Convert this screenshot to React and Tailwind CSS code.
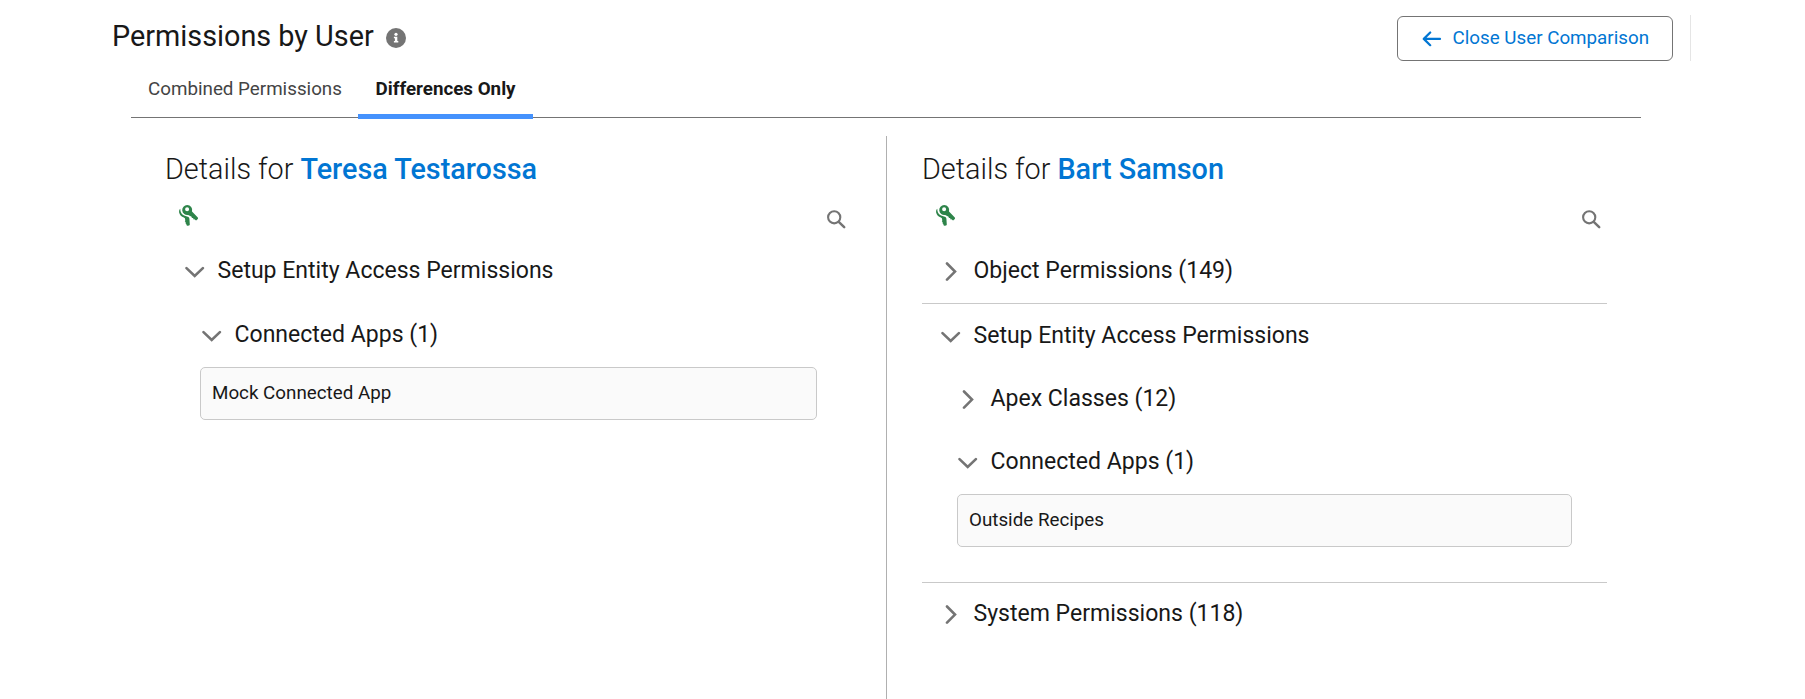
function InfoIcon() {
  return (
    <svg width="20" height="20" viewBox="0 0 20 20">
      <circle cx="10" cy="10" r="10" fill="#747474" />
      <circle cx="10" cy="6.3" r="1.6" fill="#fff" />
      <path d="M7.9 8.8h3.4v4.2h1v1.5H7.9V13h1v-2.7h-1z" fill="#fff" />
    </svg>
  );
}

function ArrowLeft() {
  return (
    <svg width="20" height="16" viewBox="0 0 20 16" fill="none" stroke="#0176d3" strokeWidth="2.2" strokeLinecap="round" strokeLinejoin="round">
      <path d="M18 7.9H2.2M8.2 1.5L1.8 7.9l6.4 6.3" />
    </svg>
  );
}

function KeysIcon() {
  return (
    <svg width="20" height="22" viewBox="0 0 20 22" fill="#2e844a">
      <path
        fillRule="evenodd"
        d="M8.2 0a5 5 0 0 1 4.8 6.4l5.8 6.200c.4.4.4.9 0 1.300l-1.100 1.200c-.4.4-.9.4-1.300 0l-.9-.9-.9.2-.5-1.300-1.200-.2-.3-1.200L9.200 9.900A5 5 0 1 1 8.200 0zm-.1 2.200a2 2 0 1 0 0 4 2 2 0 0 0 0-4z"
      />
      <path d="M1.300 3.800C.2 4.800-.1 6.300.2 7.700c.5 2.300 2.300 4.100 4.700 4.700l1 .9.400 2.100-.5.900.9.900-.2 1 .8.900.2 1c.2.600.6.800 1.100.7l1.500-.4c.5-.1.800-.5.700-1l-.4-5.700c-.1-1.100-.7-1.700-1.600-2C4.600 10.900 1.200 9 1.300 3.800z" />
    </svg>
  );
}

function SearchIcon() {
  return (
    <svg width="19" height="19" viewBox="0 0 19 19" fill="none" stroke="#747474" strokeLinecap="round">
      <circle cx="7.2" cy="7.3" r="6.1" strokeWidth="2.1" />
      <path d="M12 12.100l5.200 5" strokeWidth="2.5" />
    </svg>
  );
}

function Chevron({ open }) {
  return (
    <svg width="20" height="20" viewBox="0 0 20 20" fill="none" stroke="#747474" strokeWidth="2.6" strokeLinecap="round">
      {open ? <path d="M1.500 6.100l8.200 7.900 8.200-7.900" /> : <path d="M6 1.500l8 8.100-8 8.100" />}
    </svg>
  );
}

function Row({ open, className, children }) {
  return (
    <div className={`flex items-center gap-[12.5px] text-[23.04px] text-[#181818] ${className}`}>
      <span className="pt-[3px]">
        <Chevron open={open} />
      </span>
      <span className="pt-0.5">{children}</span>
    </div>
  );
}

function Item({ children }) {
  return (
    <div className="mt-px mr-[35px] ml-[34.500px] flex h-[53px] items-center rounded-[5px] border border-[#c9c9c9] bg-[#fafafa] pl-[11.500px] text-[18.8px] text-[#181818]">
      {children}
    </div>
  );
}

function PanelHeader({ name }) {
  return (
    <>
      <h2 className="mt-[15px] h-9 text-[28.8px] leading-9 font-light text-[#181818]">
        Details for <span className="font-medium text-[#0176d3]">{name}</span>
      </h2>
      <div className="flex h-[51px] items-start justify-between pr-1.5 pl-[14px]">
        <span className="pt-[18px]">
          <KeysIcon />
        </span>
        <span className="pt-[22.500px]">
          <SearchIcon />
        </span>
      </div>
    </>
  );
}

export default function App() {
  return (
    <div className="flex h-[699px] w-full flex-col overflow-hidden bg-white font-['Roboto',sans-serif]">
      <header className="flex h-[62px] items-start justify-between pr-[114px] pl-[112px]">
        <div className="flex items-center gap-[12.500px] pt-[18px]">
          <h1 className="text-[28.8px] leading-9 text-[#181818]">Permissions by User</h1>
          <span className="pt-1">
            <InfoIcon />
          </span>
        </div>
        <div className="flex h-[61px] gap-[17px] pt-4">
          <button className="flex h-[45px] w-[276px] items-center gap-[11px] rounded-[6px] border border-[#747474] pb-px pl-[23.500px] text-[18.8px] text-[#0176d3]">
            <span className="pt-0.5">
              <ArrowLeft />
            </span>
            Close User Comparison
          </button>
          <div className="-mt-px w-px bg-[#e5e5e5]" />
        </div>
      </header>

      <nav className="mr-[164px] ml-[131px] flex h-14 border-b border-[#747474] text-[18.8px] leading-[22px]">
        <div className="w-[227px] pt-4 pl-[17px] text-[#444444]">Combined Permissions</div>
        <div className="flex w-[175px] flex-col pt-4 pl-[17.500px] font-bold text-[#181818]">
          Differences Only
          <div className="mt-[14px] -ml-[17.500px] h-[5px] shrink-0 bg-[#4592fd]" />
        </div>
      </nav>

      <main className="mt-[18px] mr-[198px] ml-[165px] flex flex-1">
        <section className="w-[687px] shrink-0">
          <PanelHeader name="Teresa Testarossa" />
          <Row open className="h-16 pl-5">Setup Entity Access Permissions</Row>
          <Row open className="h-16 pl-[37px]">Connected Apps (1)</Row>
          <Item>Mock Connected App</Item>
        </section>
        <section className="ml-[34px] flex-1 border-l border-[#b0b0b0] pl-[35px]">
          <PanelHeader name="Bart Samson" />
          <Row className="h-[65px] pl-[19px]">Object Permissions (149)</Row>
          <div className="border-y border-[#c9c9c9] pb-[35px]">
            <Row open className="h-[62px] pl-[19px]">Setup Entity Access Permissions</Row>
            <Row className="h-16 pl-9">Apex Classes (12)</Row>
            <Row open className="h-[63px] pl-9">Connected Apps (1)</Row>
            <Item>Outside Recipes</Item>
          </div>
          <Row className="h-[60px] pl-[19px]">System Permissions (118)</Row>
        </section>
      </main>
    </div>
  );
}
